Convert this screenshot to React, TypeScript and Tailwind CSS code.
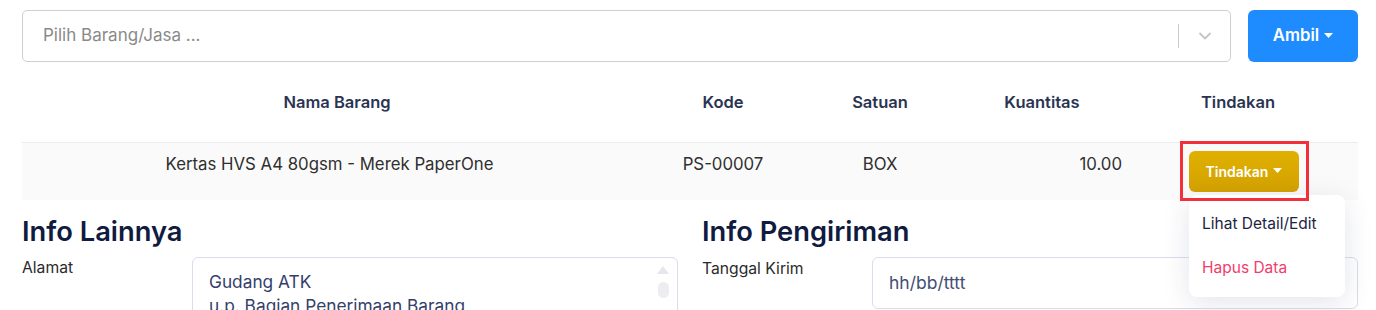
import { ChevronDown } from "lucide-react";

function Caret() {
  return (
    <svg width="9" height="5" viewBox="0 0 9 5" className="ml-[5px] mt-[-2px]">
      <path d="M0 0h9L4.5 5z" fill="currentColor" />
    </svg>
  );
}

export default function App() {
  return (
    <div className="w-[1376px] h-[310px] overflow-hidden bg-white pl-[22px] pr-[18px] pt-[10px] font-['Inter','Noto_Sans',sans-serif] text-[15px] text-[#333]">
      {/* Item picker */}
      <div className="flex gap-[17px]">
        <div className="flex flex-1 h-[52px] items-center rounded-[5px] border border-[#cfcfcf] bg-white">
          <span className="flex-1 pl-[20px] text-[17px] text-[#8a8a8a]">Pilih Barang/Jasa ...</span>
          <div className="h-[24px] w-px bg-[#cccccc]" />
          <div className="flex w-[51px] justify-center">
            <ChevronDown size={20} strokeWidth={2.2} className="text-[#c4c4c4]" />
          </div>
        </div>
        <button className="flex h-[52px] w-[110px] items-center justify-center rounded-[6px] bg-[#1e8bff] text-[16.7px] font-semibold text-white">
          Ambil
          <Caret />
        </button>
      </div>

      {/* Table */}
      <div className="mt-[18px] w-full">
        <div className="grid h-[62px] grid-cols-[630px_142px_172px_152px_240px] pt-[11px] text-[16.5px] font-semibold leading-[22px] text-[#2a3452]">
          <div className="text-center">Nama Barang</div>
          <div className="text-center">Kode</div>
          <div className="text-center">Satuan</div>
          <div className="text-center">Kuantitas</div>
          <div className="text-center">Tindakan</div>
        </div>
        <div className="grid h-[58px] grid-cols-[630px_142px_172px_152px_240px] border-t border-[#ececec] bg-[#fafafa] text-[16.8px] leading-[22px] text-[#2f2f2f]">
          <div className="pt-[10px] pr-[15px] text-center">Kertas HVS A4 80gsm - Merek PaperOne</div>
          <div className="pt-[10px] text-center">PS-00007</div>
          <div className="pt-[10px] text-center">BOX</div>
          <div className="mr-[-4px] pt-[10px] text-right">10.00</div>
          <div className="relative pl-[71px] pt-[8px]">
            <div className="relative w-[110px]">
              <button className="flex h-[41px] w-[110px] items-center justify-center rounded-[6px] bg-gradient-to-b from-[#dfb000] to-[#d4a200] text-[14px] font-semibold text-white">
                Tindakan
                <Caret />
              </button>
              <div className="absolute left-0 top-[44px] z-10 w-[156px] rounded-[8px] bg-white py-[7px] shadow-[0_6px_28px_rgba(30,40,90,0.12)]">
                <div className="flex h-[44px] items-center pl-[13px] text-[15.5px] text-[#1c2440]">Lihat Detail/Edit</div>
                <div className="flex h-[44px] items-center pl-[13px] text-[15.5px] text-[#f23d6b]">Hapus Data</div>
              </div>
              <div className="pointer-events-none absolute left-[-9px] right-[-10px] top-[-10px] bottom-[-9px] z-20 border-[3px] border-[#f2303a]" />
            </div>
          </div>
        </div>
      </div>

      {/* Info sections */}
      <div className="mt-[14px] grid grid-cols-2 gap-[24px]">
        <div>
          <h2 className="text-[27.3px] font-semibold leading-[36px] text-[#0f1b3f]">Info Lainnya</h2>
          <div className="mt-[7px] flex">
            <div className="w-[170px] text-[15.7px] leading-[22px] text-[#2a2a2a]">Alamat</div>
            <div className="relative h-[80px] flex-1 rounded-[6px] border border-[#dcdcec] px-[16px] pt-[12px] text-[17.3px] leading-[24px] text-[#33406a]">
              <div>Gudang ATK</div>
              <div>u.p. Bagian Penerimaan Barang</div>
              <div className="absolute right-[8px] top-[8px] flex flex-col items-center">
                <svg width="12" height="8" viewBox="0 0 12 8">
                  <path d="M6 0L12 8H0z" fill="#e6e6ec" />
                </svg>
                <div className="mt-[8px] h-[16px] w-[11px] rounded-full bg-[#ececf1]" />
              </div>
            </div>
          </div>
        </div>
        <div>
          <h2 className="text-[27.3px] font-semibold leading-[36px] text-[#0f1b3f]">Info Pengiriman</h2>
          <div className="mt-[7px] flex">
            <div className="w-[170px] pt-[1px] text-[15.7px] leading-[22px] text-[#2a2a2a]">Tanggal Kirim</div>
            <div className="flex h-[52px] flex-1 items-center rounded-[6px] border border-[#dcdcec] px-[16px] text-[17.5px] text-[#434e72]">
              hh/bb/tttt
            </div>
          </div>
        </div>
      </div>
    </div>
  );
}
